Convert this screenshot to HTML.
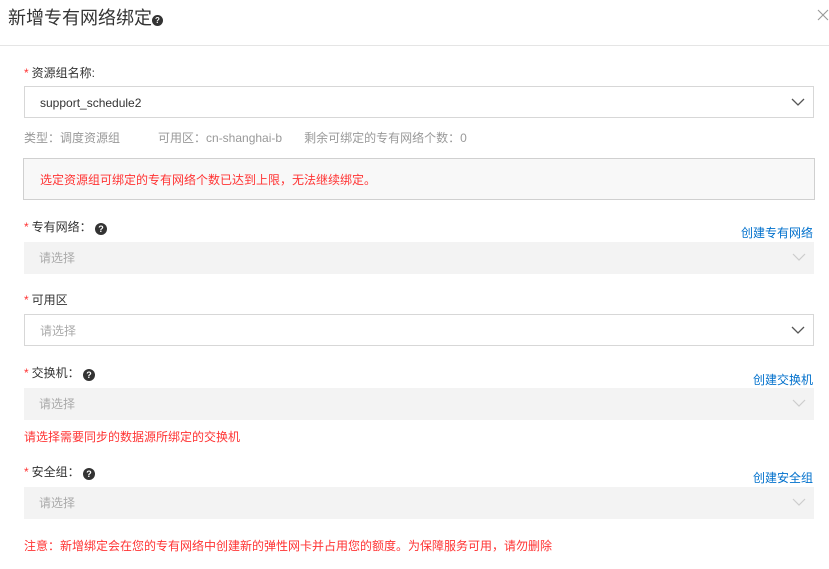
<!DOCTYPE html>
<html><head><meta charset="utf-8"><style>
*{margin:0;padding:0;box-sizing:border-box}
body{width:829px;height:569px;background:#fff;font-family:"Liberation Sans","Noto Sans CJK SC",sans-serif;font-size:12px;color:#333;position:relative;overflow:hidden}
.a{position:absolute;white-space:nowrap;line-height:16px}
.st{color:#f33;margin-right:3px}
.inp{position:absolute;left:24px;width:790px;height:32px;border:1px solid #d7d7d7;background:#fff}
.dis{border:none;background:#f3f3f3}
.inp span{position:absolute;left:15px;top:8px;line-height:16px}
.dis span,.ph{color:#aaa}
.chev{position:absolute;right:8px;top:10px}
.q{display:inline-block;width:12px;height:12px;border-radius:50%;background:#333;color:#fff;font-size:9px;line-height:12px;text-align:center;font-weight:bold;vertical-align:-1px}
.lnk{color:#0070cc}
.red{color:#f33}
</style></head><body>
<div class="a" style="left:8px;top:6px;font-size:18px;line-height:24px;color:#333">新增专有网络绑定<span class="q" style="width:11px;height:11px;line-height:11px;font-size:8px;vertical-align:1px">?</span></div>
<svg style="position:absolute;left:817px;top:9px" width="12" height="12"><path d="M1 1L11 11M11 1L1 11" stroke="#999" stroke-width="1.1"/></svg>
<div style="position:absolute;left:0;top:45px;width:829px;height:1px;background:#e5e5e5"></div>

<div class="a" style="left:24px;top:65px"><span class="st">*</span>资源组名称:</div>
<div class="inp" style="top:86px"><span>support_schedule2</span><svg class="chev" width="14" height="10"><path d="M1 2L7 8L13 2" fill="none" stroke="#555" stroke-width="1.3"/></svg></div>
<div class="a" style="left:24px;top:130px;color:#999">类型：调度资源组<span style="margin-left:38px">可用区：cn-shanghai-b</span><span style="margin-left:22px">剩余可绑定的专有网络个数：0</span></div>
<div style="position:absolute;left:23px;top:158px;width:792px;height:42px;border:1px solid #d0d0d0;background:#f8f8f8"></div>
<div class="a red" style="left:40px;top:172px">选定资源组可绑定的专有网络个数已达到上限，无法继续绑定。</div>

<div class="a" style="left:24px;top:219px"><span class="st">*</span>专有网络： <span class="q">?</span></div>
<div class="a lnk" style="left:741px;top:225px">创建专有网络</div>
<div class="inp dis" style="top:242px"><span>请选择</span><svg class="chev" width="14" height="10"><path d="M1 2L7 8L13 2" fill="none" stroke="#ccc" stroke-width="1.2"/></svg></div>

<div class="a" style="left:24px;top:292px"><span class="st">*</span>可用区</div>
<div class="inp" style="top:314px"><span class="ph">请选择</span><svg class="chev" width="14" height="10"><path d="M1 2L7 8L13 2" fill="none" stroke="#555" stroke-width="1.3"/></svg></div>

<div class="a" style="left:24px;top:365px"><span class="st">*</span>交换机： <span class="q">?</span></div>
<div class="a lnk" style="left:753px;top:372px">创建交换机</div>
<div class="inp dis" style="top:388px"><span>请选择</span><svg class="chev" width="14" height="10"><path d="M1 2L7 8L13 2" fill="none" stroke="#ccc" stroke-width="1.2"/></svg></div>
<div class="a red" style="left:24px;top:429px">请选择需要同步的数据源所绑定的交换机</div>

<div class="a" style="left:24px;top:464px"><span class="st">*</span>安全组： <span class="q">?</span></div>
<div class="a lnk" style="left:753px;top:470px">创建安全组</div>
<div class="inp dis" style="top:487px"><span>请选择</span><svg class="chev" width="14" height="10"><path d="M1 2L7 8L13 2" fill="none" stroke="#ccc" stroke-width="1.2"/></svg></div>
<div class="a red" style="left:24px;top:538px">注意：新增绑定会在您的专有网络中创建新的弹性网卡并占用您的额度。为保障服务可用，请勿删除</div>
</body></html>
